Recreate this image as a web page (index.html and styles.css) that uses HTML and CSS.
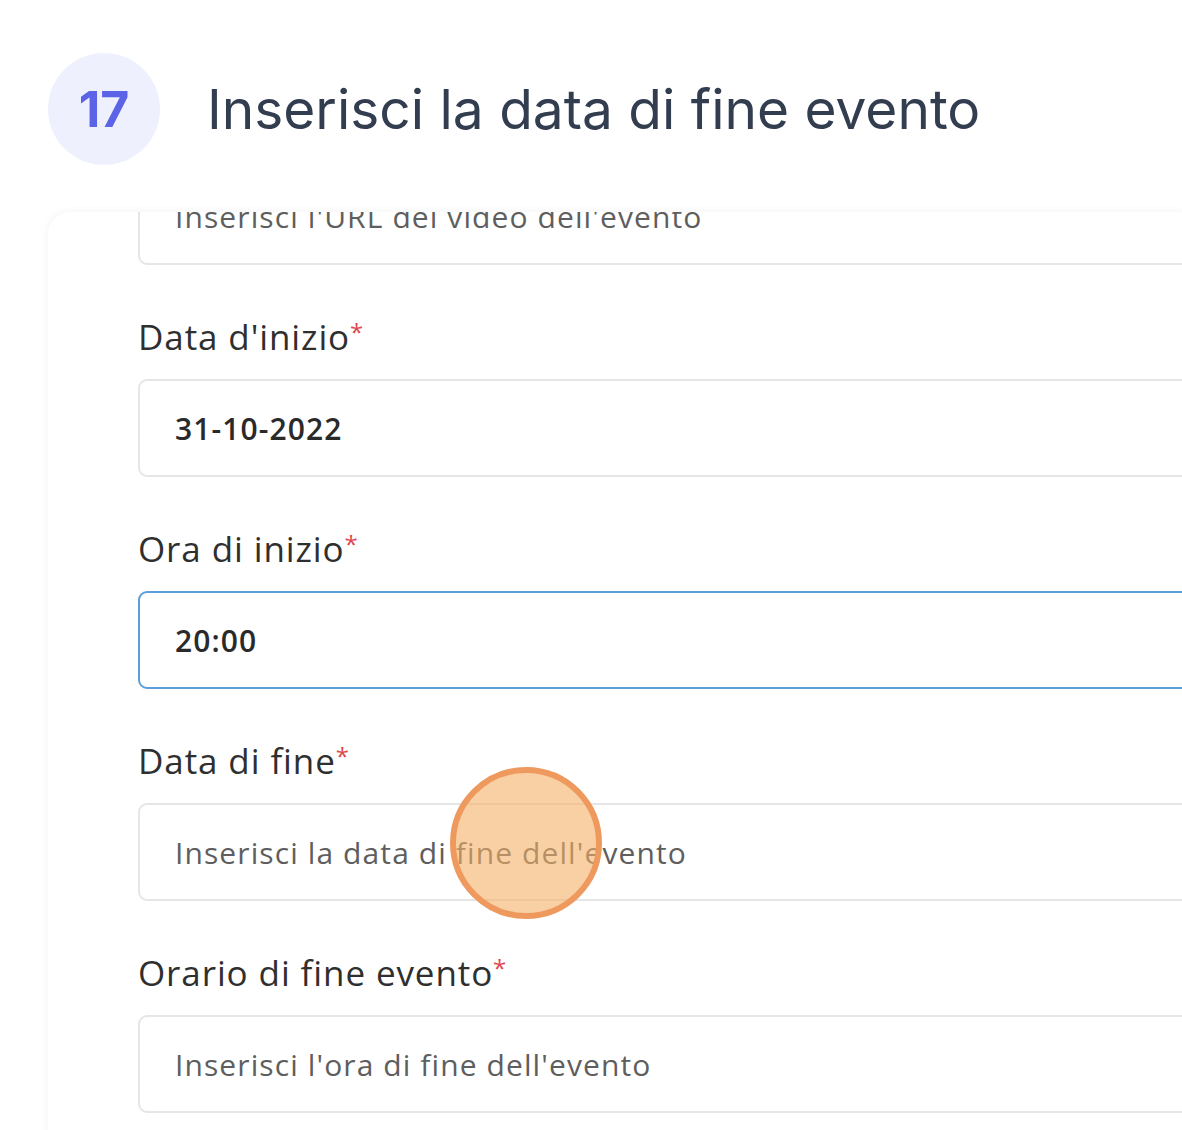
FILE: index.html
```html
<!DOCTYPE html>
<html>
<head>
    <title>Inserisci la data di fine evento</title>
    <link rel="stylesheet" href="styles.css">
</head>
<body>
    <div class="step-head">
        <div class="step-num">17</div>
        <h1 class="step-title">Inserisci la data di fine evento</h1>
    </div>

    <div class="shot">
        <form class="event-form">
            <div class="field">
                <input class="input" type="text" placeholder="Inserisci l'URL del video dell'evento">
            </div>

            <div class="field">
                <label class="label">Data d'inizio<span class="req">*</span></label>
                <input class="input" type="text" value="31-10-2022">
            </div>

            <div class="field">
                <label class="label">Ora di inizio<span class="req">*</span></label>
                <input class="input focused" type="text" value="20:00">
            </div>

            <div class="field">
                <label class="label">Data di fine<span class="req">*</span></label>
                <div class="input-wrap">
                    <input class="input" type="text" placeholder="Inserisci la data di fine dell'evento">
                    <span class="click-dot"></span>
                </div>
            </div>

            <div class="field">
                <label class="label">Orario di fine evento<span class="req">*</span></label>
                <input class="input" type="text" placeholder="Inserisci l'ora di fine dell'evento">
            </div>
        </form>
    </div>
</body>
</html>
```

FILE: styles.css
```css
body {
    margin: 0;
    background: #fff;
    font-family: Inter, "Noto Sans", sans-serif;
    overflow: hidden;
}

.step-head {
    display: flex;
    align-items: center;
    gap: 47px;
    padding: 53px 0 0 48px;
    height: 112px;
}

.step-num {
    width: 112px;
    height: 112px;
    border-radius: 50%;
    background: #eef1fd;
    color: #5b63e6;
    font-weight: 700;
    font-size: 50px;
    display: flex;
    align-items: center;
    justify-content: center;
    flex-shrink: 0;
}

.step-title {
    margin: 0;
    font-weight: 400;
    font-size: 55px;
    color: #333d50;
    white-space: nowrap;
}

.shot {
    margin: 47px 0 0 48px;
    height: 940px;
    overflow: hidden;
    border-radius: 22px 0 0 0;
    background: #fff;
    box-shadow: 0 0 8px rgba(0, 0, 0, 0.06);
    padding-left: 90px;
}

.event-form {
    margin-top: -45px;
    font-family: "Open Sans", sans-serif;
}

.field {
    margin-bottom: 52px;
}

.label {
    display: block;
    font-size: 35px;
    letter-spacing: 0.9px;
    color: #2f2f2f;
    margin-bottom: 22px;
    line-height: 40px;
}

.req {
    color: #e0464c;
    font-size: 24px;
    vertical-align: top;
    line-height: 30px;
}

.input-wrap {
    position: relative;
}

.input {
    display: block;
    box-sizing: border-box;
    width: 1100px;
    height: 98px;
    padding: 0 35px;
    border: 2px solid #e6e6e6;
    border-radius: 9px;
    background: #fff;
    font-family: "Open Sans", sans-serif;
    font-size: 30px;
    letter-spacing: 1.1px;
    font-weight: 600;
    color: #2a2a2a;
    outline: none;
}

.input::placeholder {
    color: #5e5e5e;
    font-weight: 500;
}

.input.focused {
    border-color: #5a9fdb;
}

.click-dot {
    position: absolute;
    left: 312px;
    top: -36px;
    width: 140px;
    height: 140px;
    border-radius: 50%;
    background: rgba(244, 177, 103, 0.6);
    border: 6px solid #ee9a5e;
}
```
